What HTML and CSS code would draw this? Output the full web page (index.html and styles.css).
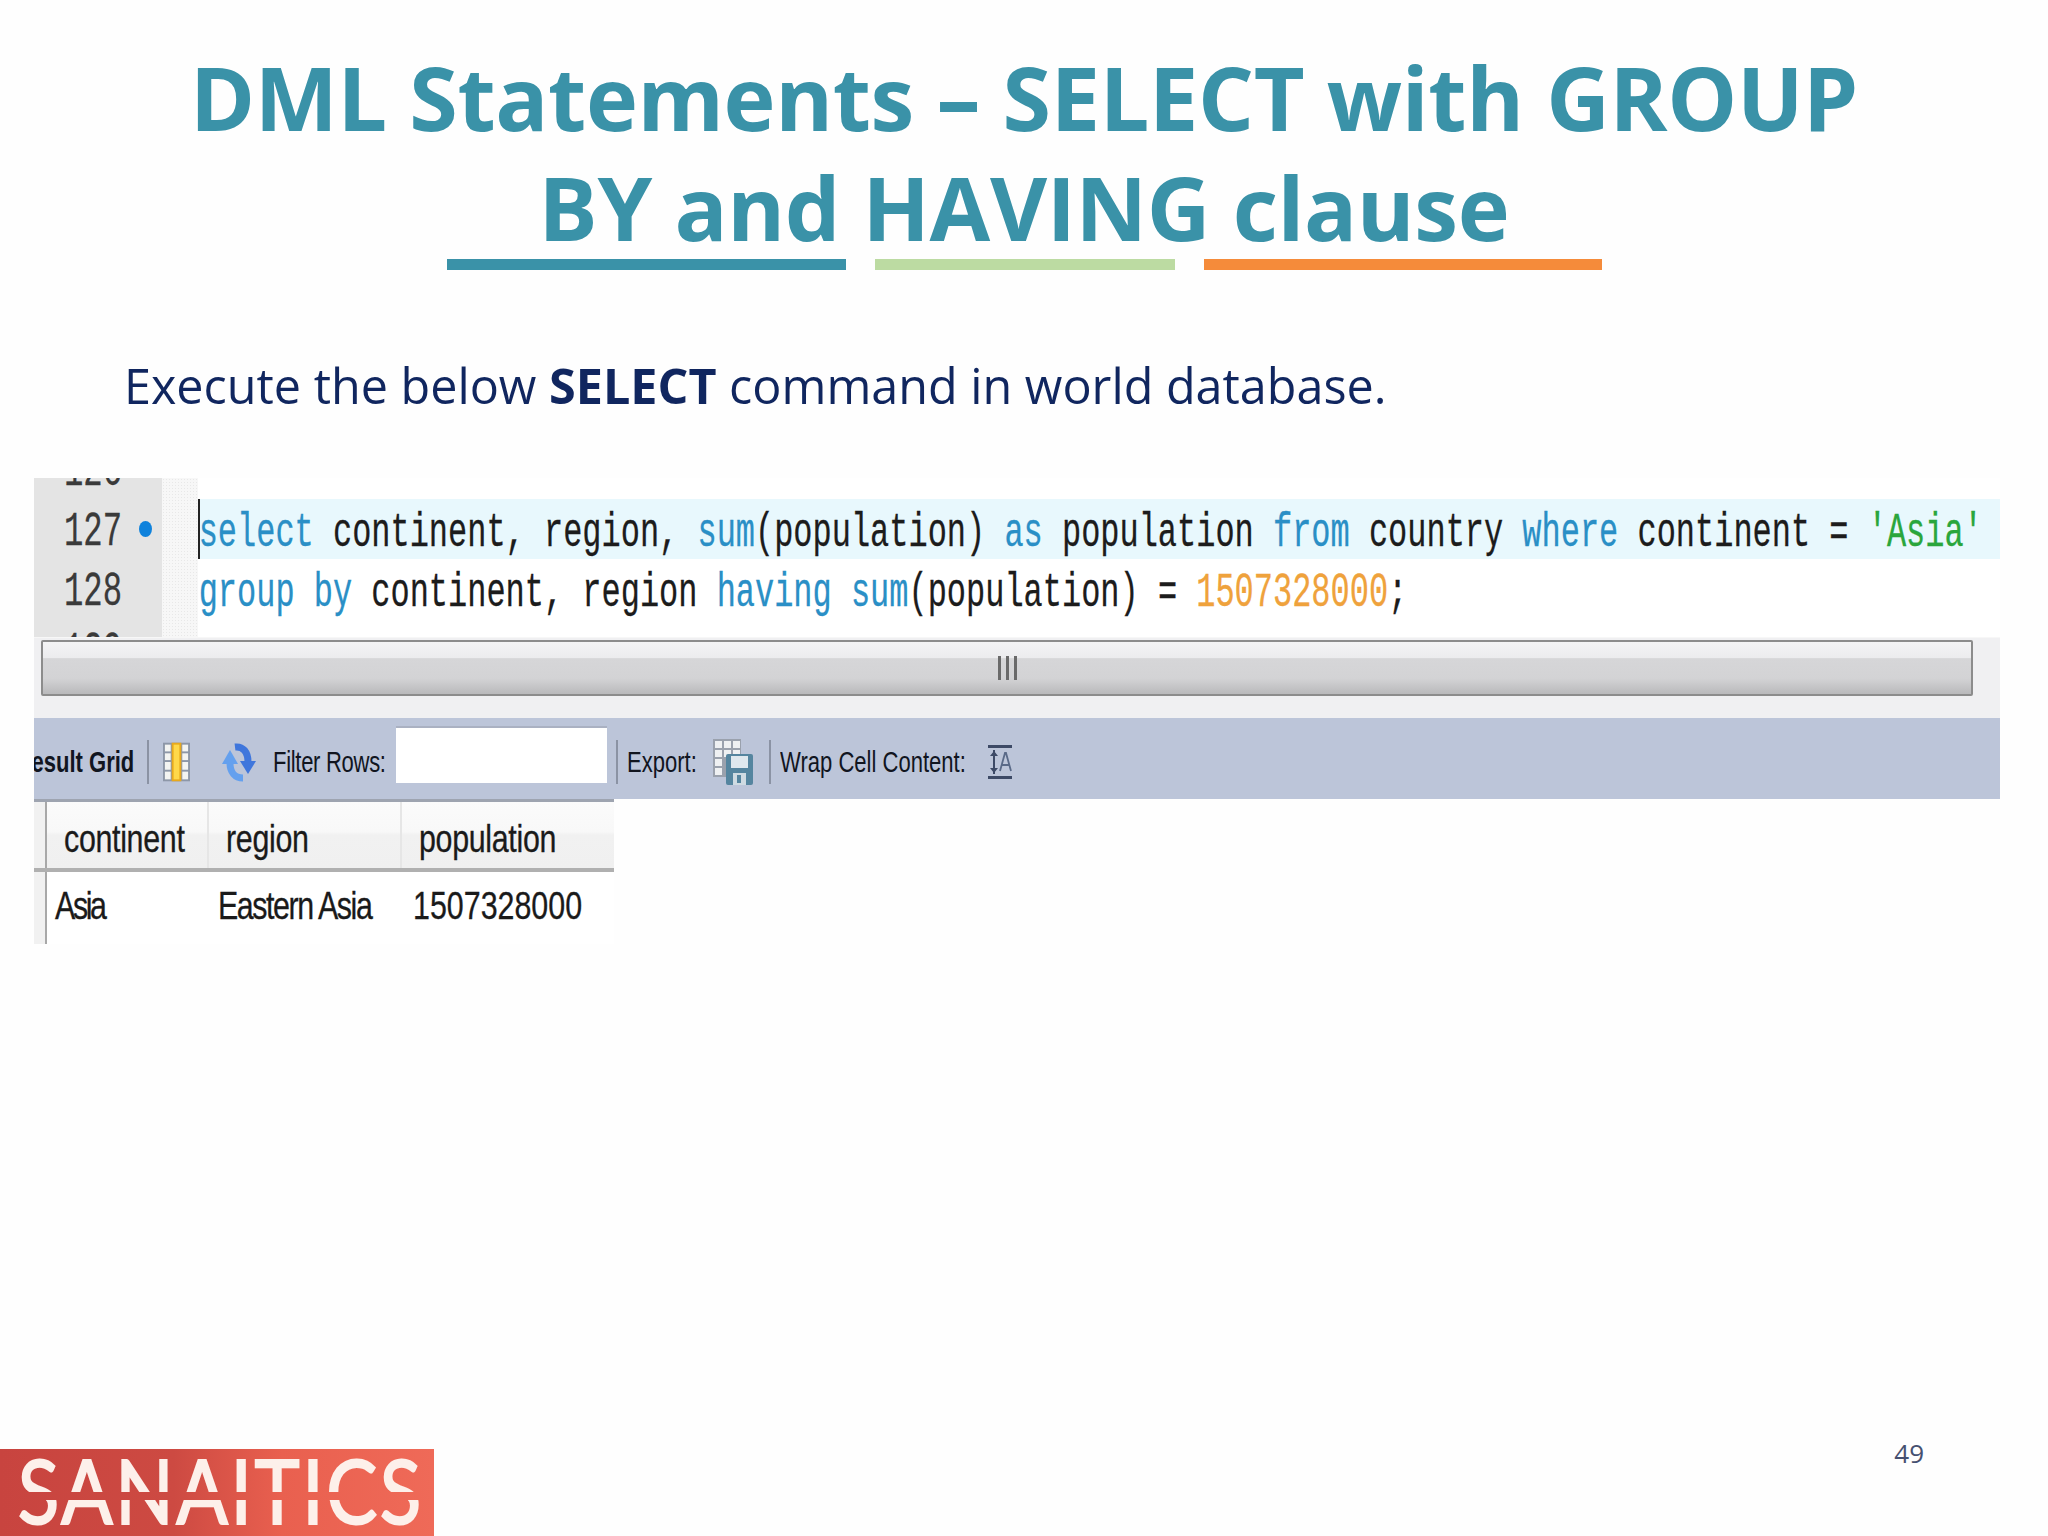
FILE: index.html
```html
<!DOCTYPE html>
<html lang="en">
<head>
<meta charset="utf-8">
<title>DML Statements – SELECT with GROUP BY and HAVING clause</title>
<link rel="stylesheet" href="styles.css">
</head>
<body>
<main class="slide">
  <h1 class="title">DML Statements – SELECT with GROUP<br>BY and HAVING clause</h1>
  <div class="accents">
    <span class="accent accent-teal"></span>
    <span class="accent accent-green"></span>
    <span class="accent accent-orange"></span>
  </div>
  <p class="intro">Execute the below <strong>SELECT</strong> command in world database.</p>

  <section class="shot">
    <div class="editor">
      <div class="gutter">
        <div class="num num-top"><span class="num-text">126</span></div>
        <div class="num"><span class="num-text">127</span><span class="dot"></span></div>
        <div class="num"><span class="num-text">128</span></div>
        <div class="num"><span class="num-text">129</span></div>
      </div>
      <div class="dots"></div>
      <div class="code">
        <div class="line line-active"><span class="caret"></span><div class="line-text"><span class="kw">select</span> continent, region, <span class="kw">sum</span>(population) <span class="kw">as</span> population <span class="kw">from</span> country <span class="kw">where</span> continent = <span class="str">'Asia'</span></div></div>
        <div class="line"><div class="line-text"><span class="kw">group by</span> continent, region <span class="kw">having</span> <span class="kw">sum</span>(population) = <span class="numlit">1507328000</span>;</div></div>
      </div>
    </div>

    <div class="splitter">
      <div class="splitter-bar">
        <span class="grip"></span><span class="grip"></span><span class="grip"></span>
      </div>
    </div>

    <div class="toolbar">
      <span class="tb-label tb-result"><span class="tb-result-text">Result Grid</span></span>
      <span class="tb-sep"></span>
      <svg class="ic ic-grid" viewBox="0 0 28 40" aria-hidden="true">
        <rect x="0" y="0" width="28" height="40" fill="#8d97a8"/>
        <g fill="#f3f4f2">
          <rect x="2" y="2" width="6" height="7"/><rect x="2" y="11" width="6" height="7"/><rect x="2" y="20" width="6" height="8"/><rect x="2" y="30" width="6" height="8"/>
          <rect x="20" y="2" width="6" height="7"/><rect x="20" y="11" width="6" height="7"/><rect x="20" y="20" width="6" height="8"/><rect x="20" y="30" width="6" height="8"/>
        </g>
        <rect x="9" y="0" width="10" height="40" fill="#e8a91c"/>
        <rect x="11" y="2" width="6" height="36" fill="#ffd84a"/>
      </svg>
      <svg class="ic ic-refresh" viewBox="0 0 34 40" aria-hidden="true">
        <path d="M13 5C21 4 26 10 26 20" stroke="#3f76dc" stroke-width="7" fill="none"/>
        <path d="M18 19h16l-8 13z" fill="#3f76dc"/>
        <path d="M21 36C13 36 8 30 8 21" stroke="#64a0ee" stroke-width="7" fill="none"/>
        <path d="M0 22h16L8 8z" fill="#64a0ee"/>
      </svg>
      <span class="tb-label tb-filter"><span class="tb-squeeze tb-tight">Filter Rows:</span></span>
      <span class="tb-input"></span>
      <span class="tb-sep tb-sep-b"></span>
      <span class="tb-label tb-export"><span class="tb-squeeze">Export:</span></span>
      <svg class="ic ic-export" viewBox="0 0 40 46" aria-hidden="true">
        <rect x="0" y="0" width="28" height="38" fill="#9aa1ad"/>
        <g fill="#eef0f2">
          <rect x="2" y="2" width="7" height="7"/><rect x="11" y="2" width="7" height="7"/><rect x="20" y="2" width="7" height="7"/>
          <rect x="2" y="11" width="7" height="7"/><rect x="11" y="11" width="7" height="7"/><rect x="20" y="11" width="7" height="7"/>
          <rect x="2" y="20" width="7" height="7"/><rect x="2" y="29" width="7" height="7"/>
        </g>
        <rect x="13" y="15" width="27" height="31" rx="2" fill="#55859f"/>
        <rect x="18" y="17" width="17" height="12" fill="#dfe8ee"/>
        <rect x="20" y="34" width="13" height="12" fill="#cfdbe2"/>
        <rect x="24" y="36" width="4" height="8" fill="#55859f"/>
      </svg>
      <span class="tb-sep tb-sep-c"></span>
      <span class="tb-label tb-wrap"><span class="tb-squeeze">Wrap Cell Content:</span></span>
      <svg class="ic ic-wrap" viewBox="0 0 24 34" aria-hidden="true">
        <path d="M0 1.500h24M0 32.500h24" stroke="#3d4a66" stroke-width="3" fill="none"/>
        <path d="M6 5v24" stroke="#3d4a66" stroke-width="2" fill="none"/>
        <path d="M2 11l4-5 4 5zM2 23l4 5 4-5z" fill="#3d4a66"/>
        <path d="M12 26 17 8h1l5 18M14 20h7" stroke="#5a6a88" stroke-width="1.800" fill="none"/>
      </svg>
    </div>

    <div class="grid">
      <div class="grid-head">
        <span class="gutter-cell"></span>
        <span class="hcell hcell-a"><span class="squeeze">continent</span></span>
        <span class="hcell hcell-b"><span class="squeeze">region</span></span>
        <span class="hcell hcell-c"><span class="squeeze">population</span></span>
      </div>
      <div class="grid-row">
        <span class="gutter-cell"></span>
        <span class="cell cell-a"><span class="squeeze">Asia</span></span>
        <span class="cell cell-b"><span class="squeeze">Eastern Asia</span></span>
        <span class="cell cell-c"><span class="squeeze">1507328000</span></span>
      </div>
    </div>
  </section>

  <footer class="footer">
    <div class="logo">
      <span class="logo-text">SANAITICS</span>
      <span class="logo-band"></span>
    </div>
    <span class="page-no">49</span>
  </footer>
</main>
</body>
</html>
```

FILE: styles.css
```css
* { box-sizing: border-box; }
html, body { margin: 0; padding: 0; }
body { background: #fefefe; font-family: "Open Sans", "Liberation Sans", sans-serif; }

.slide {
  width: 2048px;
  height: 1536px;
  overflow: hidden;
  display: flex;
  flex-direction: column;
}

.title {
  margin: 42px 0 0;
  font-size: 88px;
  line-height: 110px;
  font-weight: 700;
  text-align: center;
  color: #3a92a8;
  letter-spacing: -.35px;
}

.accents {
  display: flex;
  justify-content: center;
  gap: 29px;
  margin-top: -3px;
}
.accent { height: 11px; display: block; }
.accent-teal { width: 399px; background: #3a92a8; }
.accent-green { width: 300px; background: #bcdba2; }
.accent-orange { width: 398px; background: #f58b3a; }

.intro {
  margin: 81px 0 0 124px;
  font-size: 48.500px;
  line-height: 68px;
  color: #10265f;
}
.intro strong { font-weight: 700; }

/* screenshot */
.shot {
  margin: 59px 0 0 34px;
  width: 1966px;
}

.editor {
  height: 159px;
  display: flex;
  background: #fff;
  overflow: hidden;
}
.gutter {
  width: 128px;
  flex: none;
  background: #e4e4e4;
  overflow: hidden;
  font-family: "Liberation Mono", monospace;
  color: #3a3a3a;
  padding-top: 21px;
}
.num {
  height: 60px;
  position: relative;
  padding-left: 30px;
}
.num-top { margin-top: -60px; }
.num-text {
  display: block;
  font-size: 48px;
  line-height: 67px;
  -webkit-text-stroke: .3px #3a3a3a;
  transform: scaleX(.672);
  transform-origin: left center;
}
.dot {
  position: absolute;
  left: 105px;
  top: 22px;
  width: 13px;
  height: 16px;
  border-radius: 50%;
  background: #0f82dc;
}
.dots {
  width: 36px;
  flex: none;
  background-color: #f7f7f7;
  background-image: radial-gradient(#e8e8e8 1px, transparent 1px);
  background-size: 3px 3px;
}
.code {
  flex: 1;
  padding-top: 21px;
  min-width: 0;
}
.line {
  height: 60px;
  position: relative;
  font-family: "Liberation Mono", monospace;
  font-size: 48px;
  line-height: 68px;
  color: #1c1c1c;
  white-space: nowrap;
}
.line-active { background: #e8f8fd; }
.line-text {
  padding-left: 1px;
  -webkit-text-stroke: .3px;
  transform: scaleX(.666);
  transform-origin: left center;
}
.caret {
  position: absolute;
  left: 0;
  top: 0;
  width: 2px;
  height: 60px;
  background: #222;
}
.kw { color: #2a8fc6; }
.str { color: #2aa63c; }
.numlit { color: #efa23c; }

.splitter {
  height: 81px;
  background: #f0f0f2;
  padding: 2px 27px 0 7px;
  border-top: 1px solid #f7f7f7;
}
.splitter-bar {
  height: 56px;
  border: 2px solid #8c8c8c;
  border-radius: 2px;
  background: linear-gradient(#f4f4f5 0, #ececee 30%, #d6d6d8 32%, #d3d3d5 70%, #b9b9bb 100%);
  display: flex;
  justify-content: center;
  align-items: center;
  gap: 5px;
}
.grip { width: 3px; height: 24px; background: #6a6a6a; display: block; }

.toolbar {
  height: 81px;
  padding-top: 6px;
  background: #bcc5d9;
  display: flex;
  align-items: center;
  overflow: hidden;
  font-family: "Liberation Sans", sans-serif;
  color: #11151f;
}
.tb-label {
  flex: none;
  white-space: nowrap;
  font-size: 29px;
  line-height: 40px;
}
.tb-squeeze {
  display: inline-block;
  transform: scaleX(.76);
  transform-origin: left center;
}
.tb-tight { letter-spacing: -.4px; }
.tb-result {
  width: 100px;
  overflow: hidden;
  font-weight: 700;
  position: relative;
  height: 40px;
}
.tb-result-text {
  position: absolute;
  right: 0;
  top: 0;
  transform: scaleX(.76);
  transform-origin: right center;
}
.tb-sep { flex: none; width: 2px; height: 44px; background: #8b93a4; margin-left: 13px; }
.tb-sep-b { margin-left: 9px; }
.tb-sep-c { margin-left: 16px; }
.ic { flex: none; display: block; }
.ic-grid { width: 27px; height: 40px; margin-left: 14px; }
.ic-refresh { width: 34px; height: 40px; margin-left: 32px; }
.tb-filter { width: 112px; margin-left: 17px; }
.tb-input {
  flex: none;
  align-self: flex-start;
  width: 211px;
  height: 57px;
  background: #fff;
  margin: 2px 0 0 11px;
  border-top: 2px solid #aab1c2;
}
.tb-export { width: 71px; margin-left: 9px; }
.ic-export { width: 40px; height: 46px; margin-left: 15px; }
.tb-wrap { width: 186px; margin-left: 9px; }
.ic-wrap { width: 24px; height: 34px; margin-left: 22px; }

.grid {
  width: 580px;
  font-family: "Liberation Sans", sans-serif;
  color: #1a1a1a;
  font-size: 38px;
  -webkit-text-stroke: .3px #1a1a1a;
}
.squeeze {
  display: inline-block;
  transform: scaleX(.8);
  transform-origin: left center;
}
.grid-head {
  height: 73px;
  display: flex;
  background: linear-gradient(#fbfbfb 0, #f8f8f8 45%, #f1f1f1 50%, #f0f0f0 100%);
  border-top: 3px solid #9ea4b0;
  border-bottom: 4px solid #b0b0b0;
}
.grid-row { height: 72px; display: flex; background: #fff; }
.gutter-cell { flex: none; width: 13px; border-right: 2px solid #a8a8a8; background: #f1f1f1; }
.hcell { flex: none; line-height: 74px; padding-left: 17px; letter-spacing: -.4px; border-right: 2px solid #e6e6e6; white-space: nowrap; }
.hcell-a { width: 162px; }
.hcell-b { width: 193px; }
.hcell-c { flex: 1; border-right: 0; }
.cell { flex: none; line-height: 68px; padding-left: 8px; white-space: nowrap; }
.cell-a { width: 163px; letter-spacing: -3px; }
.cell-b { width: 195px; letter-spacing: -1.800px; }
.cell-c { flex: 1; }

/* footer */
.footer {
  margin-top: auto;
  height: 87px;
  display: flex;
  justify-content: space-between;
  align-items: flex-start;
  padding-right: 124px;
}
.logo {
  width: 434px;
  height: 87px;
  position: relative;
  background: linear-gradient(90deg, #c8443f 0, #cd4a42 40%, #e9604f 65%, #ef6a58 100%);
  overflow: hidden;
}
.logo-text {
  display: block;
  font-family: "Lato", "Open Sans", sans-serif;
  font-size: 90px;
  font-weight: 400;
  letter-spacing: 3px;
  -webkit-text-stroke: 2px #fdf0ea;
  line-height: 81px;
  padding-left: 21px;
  color: #fdf0ea;
  white-space: nowrap;
  transform: scaleX(.85);
  transform-origin: left center;
}
.logo-band {
  position: absolute;
  left: 0;
  right: 0;
  top: 43px;
  height: 8px;
  background: linear-gradient(90deg, #c8443f 0, #cd4a42 40%, #e9604f 65%, #ef6a58 100%);
}
.page-no {
  font-size: 26px;
  line-height: 36px;
  color: #465070;
  margin-top: -14px;
}
```
